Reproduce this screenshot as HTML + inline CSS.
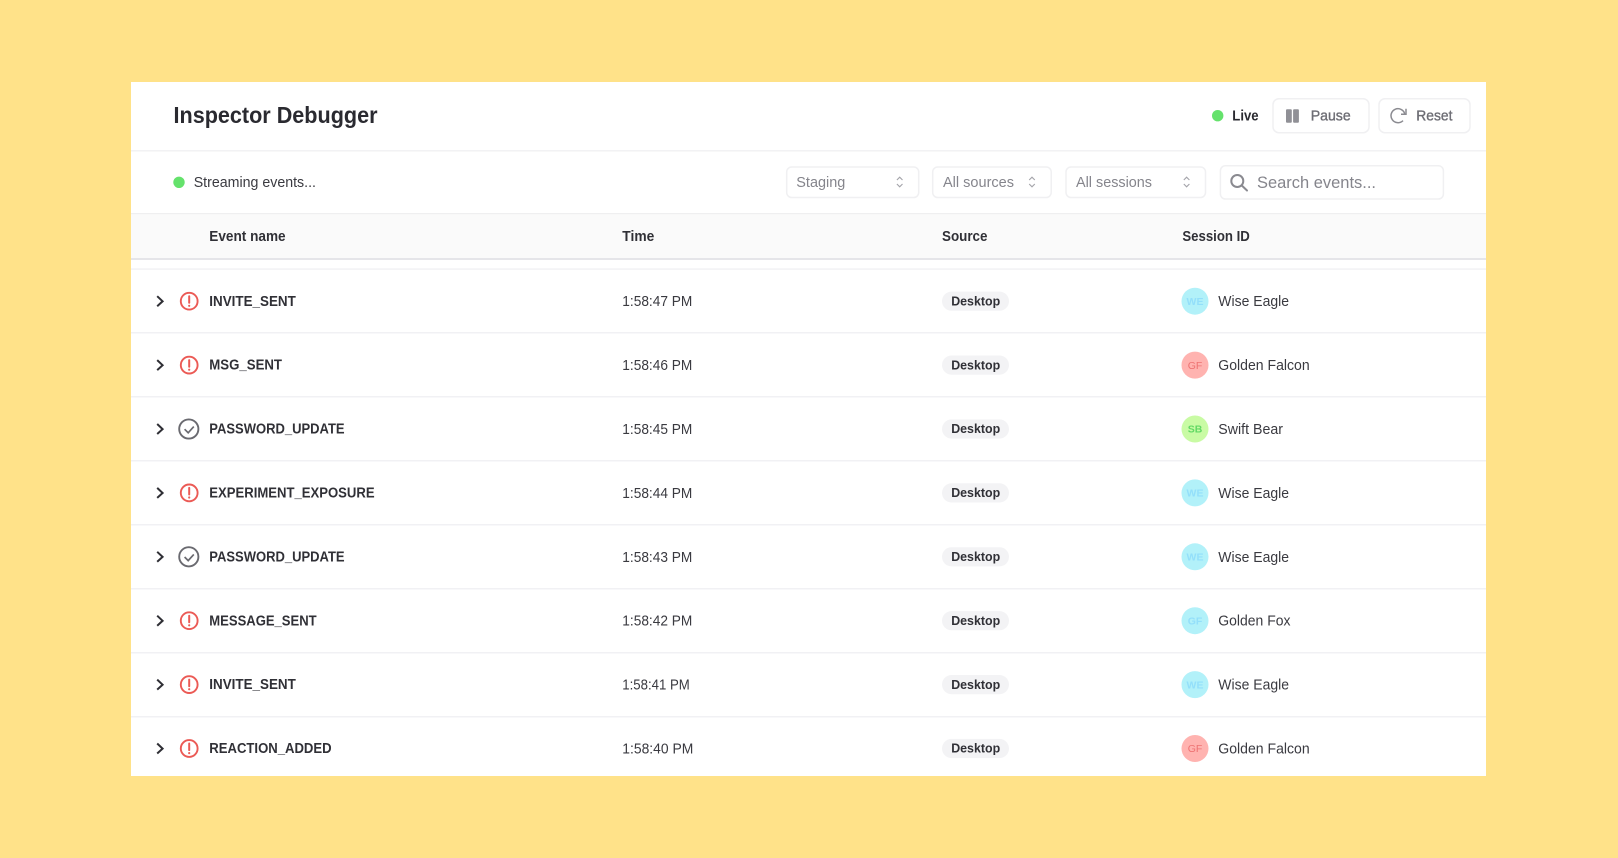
<!DOCTYPE html>
<html lang="en"><head><meta charset="utf-8"><title>Inspector Debugger</title>
<style>
html,body{margin:0;padding:0;background:#ffe289;width:1618px;height:858px;overflow:hidden}
svg{display:block;filter:blur(.3px)}
text{font-family:"Liberation Sans",sans-serif;font-size:14.5px;fill:#3a3a40}
.b{font-weight:700;fill:#303036}
.g{fill:#85858c}
.m{fill:#6d6d74;stroke:#6d6d74;stroke-width:.35}
.av{font-size:10.5px;font-weight:700;text-anchor:middle}
.bd{fill:#fff;stroke:#f0f0f2;stroke-width:1.5}
.sel{fill:none;stroke:#a4a4aa;stroke-width:1.1}
</style></head><body>
<svg width="1618" height="858" viewBox="0 0 1618 858" xmlns="http://www.w3.org/2000/svg">
<defs>
<g id="chev"><path d="M-2.8 -5L2.6 .1L-2.8 5" fill="none" stroke="#2f2f35" stroke-width="2"/></g>
<g id="alert" fill="none" stroke="#eb5a55"><circle r="8.4" stroke-width="1.9"/><path d="M0 -5V1.6" stroke-width="2" stroke-linecap="round"/><circle cy="4.6" r=".5" stroke-width="1.2"/></g>
<g id="ok" fill="none" stroke="#6a6a70"><circle r="9.6" stroke-width="1.9"/><path d="M-4.2 .2L-.6 3.8L5 -2.4" stroke-width="1.7"/></g>
<g id="sl"><path class="sel" d="M-2.8 -2L0 -4.8L2.8 -2M-2.8 2L0 4.8L2.8 2"/></g>
</defs>
<rect x="131" y="82" width="1355" height="694" fill="#fff"/>

<text x="173.5" y="123.2" class="b" style="font-size:23.5px;fill:#2a2a30" textLength="204" lengthAdjust="spacingAndGlyphs">Inspector Debugger</text>
<circle cx="1217.7" cy="115.7" r="5.7" fill="#65e26c"/>
<text x="1232.3" y="120.7" class="b" textLength="26.3" lengthAdjust="spacingAndGlyphs" style="fill:#2a2a30">Live</text>
<rect class="bd" x="1273" y="98.7" width="96" height="34" rx="6"/>
<rect x="1286" y="109.3" width="5.8" height="13.4" rx="1" fill="#909096"/><rect x="1293.1" y="109.3" width="5.8" height="13.4" rx="1" fill="#909096"/>
<text x="1310.7" y="120.7" class="m" textLength="40" lengthAdjust="spacingAndGlyphs">Pause</text>
<rect class="bd" x="1379" y="98.7" width="91" height="34" rx="6"/>
<g fill="none" stroke="#8b8b91" stroke-width="1.5"><path d="M1403 120.6A7 7 0 1 1 1404.8 114"/><path d="M1406 108.8V114.2H1401"/></g>
<text x="1416.3" y="120.7" class="m" textLength="36.2" lengthAdjust="spacingAndGlyphs">Reset</text>
<rect x="131" y="150" width="1355" height="1.6" fill="#f2f2f4"/>

<circle cx="179" cy="182.3" r="5.7" fill="#65e26c"/>
<text x="193.7" y="187.2" textLength="122.3" lengthAdjust="spacingAndGlyphs">Streaming events...</text>
<rect class="bd" x="786.7" y="167" width="132" height="30.5" rx="5"/>
<text x="796.3" y="187.2" class="g" textLength="49" lengthAdjust="spacingAndGlyphs">Staging</text>
<use href="#sl" x="899.7" y="182"/>
<rect class="bd" x="932.7" y="167" width="118.5" height="30.5" rx="5"/>
<text x="943" y="187.2" class="g" textLength="71" lengthAdjust="spacingAndGlyphs">All sources</text>
<use href="#sl" x="1032" y="182"/>
<rect class="bd" x="1066" y="167" width="139.5" height="30.5" rx="5"/>
<text x="1076" y="187.2" class="g" textLength="76" lengthAdjust="spacingAndGlyphs">All sessions</text>
<use href="#sl" x="1186.6" y="182"/>
<rect class="bd" x="1220.4" y="165.7" width="223" height="33.3" rx="5"/>
<g fill="none" stroke="#8a8a90" stroke-width="2"><circle cx="1237.3" cy="181" r="6"/><path d="M1241.8 185.5L1247 190.5" stroke-linecap="round"/></g>
<text x="1257" y="187.8" class="g" style="font-size:16.5px" textLength="119" lengthAdjust="spacingAndGlyphs">Search events...</text>

<rect x="131" y="213" width="1355" height="46" fill="#fafafa"/>
<rect x="131" y="213" width="1355" height="1.2" fill="#efeff0"/>
<rect x="131" y="258" width="1355" height="2" fill="#e5e5e9"/>
<rect x="131" y="268.4" width="1355" height="1.4" fill="#f1f1f3"/>
<text x="209.3" y="241" class="b" textLength="76.3" lengthAdjust="spacingAndGlyphs">Event name</text>
<text x="622.3" y="241" class="b" textLength="32" lengthAdjust="spacingAndGlyphs">Time</text>
<text x="942" y="241" class="b" textLength="45.5" lengthAdjust="spacingAndGlyphs">Source</text>
<text x="1182.4" y="241" class="b" textLength="67.4" lengthAdjust="spacingAndGlyphs">Session ID</text>

<g fill="#f1f1f4"><rect x="131" y="332" width="1355" height="1.5"/><rect x="131" y="396" width="1355" height="1.5"/><rect x="131" y="460" width="1355" height="1.5"/><rect x="131" y="524" width="1355" height="1.5"/><rect x="131" y="588" width="1355" height="1.5"/><rect x="131" y="652" width="1355" height="1.5"/><rect x="131" y="716" width="1355" height="1.5"/></g>

<!-- row 1 -->
<g transform="translate(0 301.2)"><use href="#chev" x="160"/><use href="#alert" x="189.2"/>
<text x="209.3" y="4.6" class="b" textLength="86.5" lengthAdjust="spacingAndGlyphs">INVITE_SENT</text>
<text x="622.3" y="5" textLength="70" lengthAdjust="spacingAndGlyphs">1:58:47 PM</text>
<rect x="942" y="-9.6" width="67" height="19.2" rx="9.6" fill="#f3f3f5"/><text x="951.2" y="4.2" class="b" style="font-size:13px" textLength="49" lengthAdjust="spacingAndGlyphs">Desktop</text>
<circle cx="1195" r="13.5" fill="#b2f1f9"/><text x="1195" y="3.7" class="av" style="fill:#93dffa">WE</text>
<text x="1218.3" y="5" textLength="70.7" lengthAdjust="spacingAndGlyphs">Wise Eagle</text></g>
<!-- row 2 -->
<g transform="translate(0 365.1)"><use href="#chev" x="160"/><use href="#alert" x="189.2"/>
<text x="209.3" y="4.6" class="b" textLength="72.7" lengthAdjust="spacingAndGlyphs">MSG_SENT</text>
<text x="622.3" y="5" textLength="70" lengthAdjust="spacingAndGlyphs">1:58:46 PM</text>
<rect x="942" y="-9.6" width="67" height="19.2" rx="9.6" fill="#f3f3f5"/><text x="951.2" y="4.2" class="b" style="font-size:13px" textLength="49" lengthAdjust="spacingAndGlyphs">Desktop</text>
<circle cx="1195" r="13.5" fill="#ffb3b0"/><text x="1195" y="3.7" class="av" style="fill:#ee7272;font-weight:400">GF</text>
<text x="1218.3" y="5" textLength="91.4" lengthAdjust="spacingAndGlyphs">Golden Falcon</text></g>
<!-- row 3 -->
<g transform="translate(0 429)"><use href="#chev" x="160"/><use href="#ok" x="188.8"/>
<text x="209.3" y="4.6" class="b" textLength="135.3" lengthAdjust="spacingAndGlyphs">PASSWORD_UPDATE</text>
<text x="622.3" y="5" textLength="70" lengthAdjust="spacingAndGlyphs">1:58:45 PM</text>
<rect x="942" y="-9.6" width="67" height="19.2" rx="9.6" fill="#f3f3f5"/><text x="951.2" y="4.2" class="b" style="font-size:13px" textLength="49" lengthAdjust="spacingAndGlyphs">Desktop</text>
<circle cx="1195" r="13.5" fill="#c9fba4"/><text x="1195" y="3.7" class="av" style="fill:#62d964">SB</text>
<text x="1218.3" y="5" textLength="64.7" lengthAdjust="spacingAndGlyphs">Swift Bear</text></g>
<!-- row 4 -->
<g transform="translate(0 492.9)"><use href="#chev" x="160"/><use href="#alert" x="189.2"/>
<text x="209.3" y="4.6" class="b" textLength="165.3" lengthAdjust="spacingAndGlyphs">EXPERIMENT_EXPOSURE</text>
<text x="622.3" y="5" textLength="70" lengthAdjust="spacingAndGlyphs">1:58:44 PM</text>
<rect x="942" y="-9.6" width="67" height="19.2" rx="9.6" fill="#f3f3f5"/><text x="951.2" y="4.2" class="b" style="font-size:13px" textLength="49" lengthAdjust="spacingAndGlyphs">Desktop</text>
<circle cx="1195" r="13.5" fill="#b2f1f9"/><text x="1195" y="3.7" class="av" style="fill:#93dffa">WE</text>
<text x="1218.3" y="5" textLength="70.7" lengthAdjust="spacingAndGlyphs">Wise Eagle</text></g>
<!-- row 5 -->
<g transform="translate(0 556.8)"><use href="#chev" x="160"/><use href="#ok" x="188.8"/>
<text x="209.3" y="4.6" class="b" textLength="135.3" lengthAdjust="spacingAndGlyphs">PASSWORD_UPDATE</text>
<text x="622.3" y="5" textLength="70" lengthAdjust="spacingAndGlyphs">1:58:43 PM</text>
<rect x="942" y="-9.6" width="67" height="19.2" rx="9.6" fill="#f3f3f5"/><text x="951.2" y="4.2" class="b" style="font-size:13px" textLength="49" lengthAdjust="spacingAndGlyphs">Desktop</text>
<circle cx="1195" r="13.5" fill="#b2f1f9"/><text x="1195" y="3.7" class="av" style="fill:#93dffa">WE</text>
<text x="1218.3" y="5" textLength="70.7" lengthAdjust="spacingAndGlyphs">Wise Eagle</text></g>
<!-- row 6 -->
<g transform="translate(0 620.7)"><use href="#chev" x="160"/><use href="#alert" x="189.2"/>
<text x="209.3" y="4.6" class="b" textLength="107.3" lengthAdjust="spacingAndGlyphs">MESSAGE_SENT</text>
<text x="622.3" y="5" textLength="70" lengthAdjust="spacingAndGlyphs">1:58:42 PM</text>
<rect x="942" y="-9.6" width="67" height="19.2" rx="9.6" fill="#f3f3f5"/><text x="951.2" y="4.2" class="b" style="font-size:13px" textLength="49" lengthAdjust="spacingAndGlyphs">Desktop</text>
<circle cx="1195" r="13.5" fill="#b2f1f9"/><text x="1195" y="3.7" class="av" style="fill:#93dffa">GF</text>
<text x="1218.3" y="5" textLength="72.2" lengthAdjust="spacingAndGlyphs">Golden Fox</text></g>
<!-- row 7 -->
<g transform="translate(0 684.6)"><use href="#chev" x="160"/><use href="#alert" x="189.2"/>
<text x="209.3" y="4.6" class="b" textLength="86.5" lengthAdjust="spacingAndGlyphs">INVITE_SENT</text>
<text x="622.3" y="5" textLength="67.5" lengthAdjust="spacingAndGlyphs">1:58:41 PM</text>
<rect x="942" y="-9.6" width="67" height="19.2" rx="9.6" fill="#f3f3f5"/><text x="951.2" y="4.2" class="b" style="font-size:13px" textLength="49" lengthAdjust="spacingAndGlyphs">Desktop</text>
<circle cx="1195" r="13.5" fill="#b2f1f9"/><text x="1195" y="3.7" class="av" style="fill:#93dffa">WE</text>
<text x="1218.3" y="5" textLength="70.7" lengthAdjust="spacingAndGlyphs">Wise Eagle</text></g>
<!-- row 8 -->
<g transform="translate(0 748.5)"><use href="#chev" x="160"/><use href="#alert" x="189.2"/>
<text x="209.3" y="4.6" class="b" textLength="122.3" lengthAdjust="spacingAndGlyphs">REACTION_ADDED</text>
<text x="622.3" y="5" textLength="71" lengthAdjust="spacingAndGlyphs">1:58:40 PM</text>
<rect x="942" y="-9.6" width="67" height="19.2" rx="9.6" fill="#f3f3f5"/><text x="951.2" y="4.2" class="b" style="font-size:13px" textLength="49" lengthAdjust="spacingAndGlyphs">Desktop</text>
<circle cx="1195" r="13.5" fill="#ffb3b0"/><text x="1195" y="3.7" class="av" style="fill:#ee7272;font-weight:400">GF</text>
<text x="1218.3" y="5" textLength="91.4" lengthAdjust="spacingAndGlyphs">Golden Falcon</text></g>
</svg>
</body></html>
